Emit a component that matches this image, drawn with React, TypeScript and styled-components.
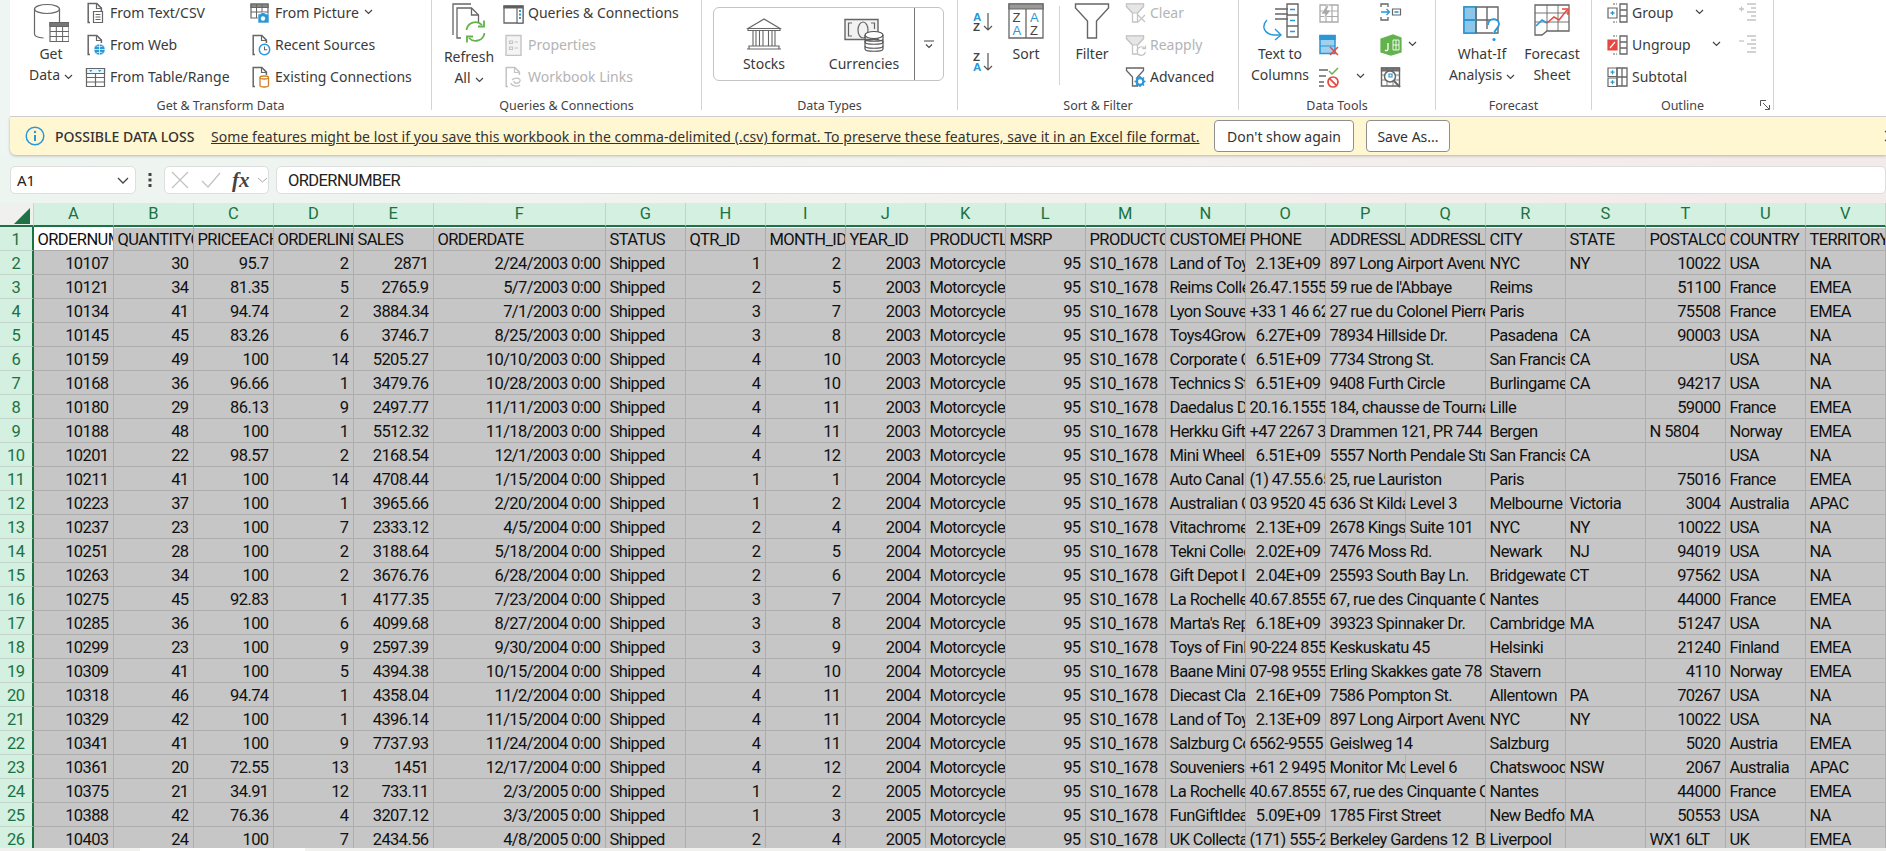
import React from 'react'
import styled, { createGlobalStyle } from 'styled-components'

const GlobalStyle = createGlobalStyle`
  html, body {
    margin: 0;
    padding: 0;
    height: 851px;
    overflow: hidden;
    background: #eef5f2;
  }
`

const uiFont = `"Noto Sans", "Open Sans", sans-serif`
const cellFont = `Roboto, "Liberation Sans", sans-serif`

const Page = styled.div`
  width: 1886px;
  height: 851px;
  display: flex;
  flex-direction: column;
  overflow: hidden;
  font-family: ${uiFont};
  color: #3a3a3a;
`

const Ribbon = styled.div`
  height: 116px;
  margin-left: 10px;
  display: flex;
  background: #fff;
  border-bottom: 1px solid #d6d6d6;
`

const Group = styled.div<{ $width: number }>`
  width: ${(p) => p.$width}px;
  height: 110px;
  flex: none;
  box-sizing: border-box;
  border-right: 1px solid #d4d4d4;
`

const GroupBody = styled.div<{ $pad: number }>`
  height: 95px;
  display: flex;
  padding-left: ${(p) => p.$pad}px;
  box-sizing: border-box;
`

const GroupLabel = styled.div`
  position: relative;
  height: 15px;
  line-height: 22px;
  text-align: center;
  font-size: 12.5px;
  color: #444;
  white-space: nowrap;
`

const Launcher = styled.svg`
  position: absolute;
  right: 3px;
  top: 5px;
`

const LargeButton = styled.div<{ $width: number; $slot?: number; $after?: number }>`
  width: ${(p) => p.$width}px;
  flex: none;
  margin-right: ${(p) => p.$after ?? 0}px;
  display: flex;
  flex-direction: column;
  align-items: center;
  font-size: 14px;
  line-height: 21px;
  white-space: nowrap;
  & > svg {
    height: ${(p) => p.$slot ?? 43}px;
    flex: none;
  }
`

const SmallList = styled.div<{ $width?: number; $after?: number }>`
  width: ${(p) => (p.$width ? `${p.$width}px` : 'auto')};
  flex: none;
  margin-right: ${(p) => p.$after ?? 0}px;
  display: flex;
  flex-direction: column;
  gap: 7px;
`

const SmallRow = styled.div<{ $off?: boolean }>`
  height: 25px;
  box-sizing: border-box;
  padding-bottom: 1px;
  display: flex;
  align-items: center;
  gap: 3px;
  font-size: 14px;
  white-space: nowrap;
  color: ${(p) => (p.$off ? '#b4b4b4' : '#3a3a3a')};
  & > svg:first-child {
    margin-top: 1px;
  }
`

const Caret = styled.svg<{ $left?: number }>`
  margin-left: ${(p) => p.$left ?? 4}px;
  flex: none;
`

const Gallery = styled.div`
  width: 231px;
  height: 74px;
  margin: 7px 0 0 0;
  box-sizing: border-box;
  display: flex;
  border: 1px solid #c4c4c4;
  border-radius: 6px;
`

const GalleryItem = styled.div`
  width: 100px;
  flex: none;
  display: flex;
  flex-direction: column;
  align-items: center;
  padding-top: 10px;
  box-sizing: border-box;
  font-size: 14px;
  line-height: 22px;
  gap: 1px;
`

const GalleryMore = styled.div`
  flex: 1;
  display: flex;
  align-items: center;
  justify-content: center;
  border-left: 1px solid #777;
`

const SortStack = styled.div`
  width: 20px;
  flex: none;
  margin: 12px 13px 0 0;
  display: flex;
  flex-direction: column;
  gap: 20px;
`

const InnerRule = styled.div`
  width: 1px;
  height: 79px;
  margin: 6px 12px 0 0;
  flex: none;
  background: #d4d4d4;
`

const Notice = styled.div`
  height: 38px;
  margin-left: 10px;
  flex: none;
  display: flex;
  align-items: center;
  padding-left: 15px;
  background: #fff6d2;
  border-bottom-left-radius: 6px;
  box-shadow: 0 1px 3px rgba(0, 0, 0, 0.25);
  font-size: 14px;
  white-space: nowrap;
  position: relative;
`

const NoticeTitle = styled.span`
  margin-left: 10px;
  width: 156px;
  flex: none;
  font-weight: 500;
  color: #333;
`

const NoticeText = styled.span`
  width: 988px;
  flex: none;
  text-decoration: underline;
  letter-spacing: 0.05px;
  color: #333;
`

const NoticeButton = styled.div<{ $width: number; $left: number }>`
  width: ${(p) => p.$width}px;
  margin-left: ${(p) => p.$left}px;
  height: 32px;
  flex: none;
  display: flex;
  align-items: center;
  justify-content: center;
  box-sizing: border-box;
  background: #fff;
  border: 1px solid #8f8f8f;
  border-radius: 4px;
  color: #333;
`

const NoticeClose = styled.svg`
  margin-left: auto;
  margin-right: -10px;
  flex: none;
`

const FormulaArea = styled.div`
  height: 48px;
  flex: none;
  box-sizing: border-box;
  padding: 11px 0 9px 10px;
  display: flex;
  background: linear-gradient(90deg, #edf5f1 0%, #f3f2ef 50%, #f3eaea 100%);
`

const FieldBox = styled.div<{ $width?: number; $left?: number }>`
  width: ${(p) => (p.$width ? `${p.$width}px` : 'auto')};
  flex: ${(p) => (p.$width ? 'none' : '1')};
  margin-left: ${(p) => p.$left ?? 0}px;
  height: 28px;
  box-sizing: border-box;
  display: flex;
  align-items: center;
  background: #fff;
  border: 1px solid #dedede;
  border-radius: 5px;
`

const NameText = styled.span`
  margin-left: 6px;
  width: 100px;
  font-size: 15px;
  color: #222;
`

const GripDots = styled.svg`
  margin: 0 12px 0 12px;
  flex: none;
  align-self: center;
`

const BarGlyph = styled.svg<{ $left: number }>`
  margin-left: ${(p) => p.$left}px;
  flex: none;
`

const FxMark = styled.span`
  font-family: "Liberation Serif", serif;
  font-style: italic;
  font-weight: 700;
  font-size: 21px;
  line-height: 26px;
  width: 24px;
  margin-left: 11px;
  color: #444;
`

const FormulaText = styled.span`
  margin-left: 11px;
  font-family: ${cellFont};
  font-size: 16.5px;
  letter-spacing: -0.6px;
  color: #222;
`

const SheetArea = styled.div`
  flex: 1;
  overflow: hidden;
  min-height: 0;
`

const SheetGrid = styled.div`
  display: grid;
  grid-template-columns: 33.5px repeat(5, 80px) 172px repeat(16, 80px);
  grid-template-rows: 23.67px;
  grid-auto-rows: 24px;
  font-family: ${cellFont};
  font-size: 16.5px;
  letter-spacing: -0.6px;
  color: #111;
`

const CornerCell = styled.div`
  background: #f0f0ee;
  border-bottom: 2px solid #1e7145;
  border-right: 1px solid #c9d4ce;
  display: flex;
  align-items: flex-end;
  justify-content: flex-end;
  padding: 0 3px 1px 0;
`

const ColHead = styled.div`
  background: #d3f0e0;
  color: #1e7145;
  text-align: center;
  line-height: 22px;
  border-right: 1px solid #c2d5ca;
  border-bottom: 2px solid #1e7145;
  box-sizing: border-box;
`

const RowHead = styled.div`
  background: #d3f0e0;
  color: #1e7145;
  text-align: center;
  line-height: 25px;
  box-sizing: border-box;
  border-right: 2px solid #1e7145;
  border-bottom: 1px solid #c2d5ca;
`

const Cell = styled.div<{ $right: boolean; $span: number; $active: boolean; $top: boolean }>`
  grid-column: span ${(p) => p.$span};
  box-sizing: border-box;
  overflow: hidden;
  white-space: pre;
  line-height: 25px;
  padding: 0 4px;
  text-align: ${(p) => (p.$right ? 'right' : 'left')};
  background: ${(p) => (p.$active ? '#fff' : '#c6c6c6')};
  border-right: 1px solid #adadad;
  border-bottom: 1px solid #adadad;
  box-shadow: ${(p) => (p.$top ? 'inset 0 1px 0 #fff' : 'none')};
`

const BottomStrip = styled.div`
  height: 3px;
  flex: none;
  display: flex;
  background: #f1f1f0;
`

const BottomTab = styled.div`
  width: 165px;
  margin-left: 140px;
  background: #fff;
`

const IconSvg = styled.svg`
  flex: none;
`

// ---- drawings ----

const ink = '#666'
const off = '#c4c4c4'
const blue = '#2a97d6'
const green = '#62b34c'
const red = '#e5493f'
const amber = '#d17f21'

const Ico = ({ w = 22, h = 22, children }: { w?: number; h?: number; children: React.ReactNode }) => (
  <IconSvg width={w} height={h} viewBox={`0 0 ${w} ${h}`} fill="none" stroke={ink} strokeWidth="1.2">
    {children}
  </IconSvg>
)

const Doc = ({ c = ink }: { c?: string }) => (
  <>
    <path d="M5 20.5H3.2V1.5h8.6l4.6 4.6V9" stroke={c} strokeWidth="1.5" />
    <path d="M11.5 1.5v5h5" stroke={c} />
  </>
)

const DownCaret = ({ left, color = '#444' }: { left?: number; color?: string }) => (
  <Caret $left={left} width="9" height="6" viewBox="0 0 9 6" fill="none" stroke={color} strokeWidth="1.2">
    <path d="M1 1l3.5 3.5L8 1" />
  </Caret>
)

const GetDataIcon = () => (
  <Ico w={36} h={43}>
    <ellipse cx="14" cy="9" rx="12.5" ry="4.5" />
    <path d="M1.5 9v25c0 2 4 3.6 9 4M26.5 9v13" />
    <path d="M17 22.5h19v19H17z" fill="#fff" />
    <path d="M17 22.5h19v4H17z" fill="#777" />
    <path d="M17 31.5h19M17 36.5h19M23.3 26.5v15M29.6 26.5v15" strokeWidth="1" />
  </Ico>
)

const TextCsvIcon = () => (
  <Ico>
    <Doc />
    <path d="M8.5 9.5h9v11h-9z" fill="#fff" />
    <path d="M10.5 12.5h5M10.5 15h5M10.5 17.5h5" strokeWidth="1" />
  </Ico>
)

const WebIcon = () => (
  <Ico>
    <Doc />
    <circle cx="14.5" cy="15.5" r="5.6" fill={blue} stroke="#fff" strokeWidth="0.6" />
    <path d="M9 15.5h11M14.5 10v11M11.5 12c2 1 4 1 6 0M11.5 19c2-1 4-1 6 0" stroke="#fff" strokeWidth="0.7" />
  </Ico>
)

const TableIcon = () => (
  <Ico>
    <path d="M1.5 2.5h18v18h-18z" />
    <path d="M1.5 2.5h18v5h-18z" fill="#eaf5fc" />
    <path d="M4 4h3.5L5.7 6zM13 4h3.5l-1.8 2z" fill={blue} stroke="none" />
    <path d="M1.5 11.5h18M1.5 16h18M10.5 7.5v13" />
  </Ico>
)

const PictureIcon = () => (
  <Ico>
    <path d="M1 2h17v14H1z" />
    <path d="M1 2h17v3.5H1z" fill="#888" />
    <path d="M1 10h17M6.5 2v14M12 2v14" strokeWidth="1" />
    <path d="M8 12h2.5l1-1.5h3l1 1.5h3.5v9H8z" fill={blue} stroke="#fff" strokeWidth="0.6" />
    <circle cx="13" cy="16.5" r="2.2" fill="#fff" stroke="none" />
  </Ico>
)

const RecentIcon = () => (
  <Ico>
    <Doc />
    <circle cx="14.5" cy="15.5" r="5.2" fill="#fff" stroke={blue} strokeWidth="1.5" />
    <path d="M14.5 12.5v3.2h2.8" stroke={ink} strokeWidth="1.1" />
  </Ico>
)

const ExistingIcon = () => (
  <Ico>
    <Doc />
    <path d="M10 11.5c0-2 8.5-2 8.5 0v8c0 2-8.5 2-8.5 0z" fill="#fff" stroke={amber} strokeWidth="1.3" />
    <path d="M10 11.5c0 2 8.5 2 8.5 0" stroke={amber} strokeWidth="1.3" />
  </Ico>
)

const RefreshIcon = () => (
  <Ico w={36} h={46}>
    <path d="M2 35V4h18" strokeWidth="1.3" />
    <path d="M10 38H6V8h14.5l7 7v7" strokeWidth="1.3" />
    <path d="M20.5 8v7h7" strokeWidth="1.3" />
    <path d="M15.5 30a9 9 0 0 1 15.5-5" stroke={green} strokeWidth="1.8" />
    <path d="M33 20.5v6h-6" stroke={green} strokeWidth="1.8" />
    <path d="M33.5 33a9 9 0 0 1-15.5 5" stroke={green} strokeWidth="1.8" />
    <path d="M16 42.5v-6h6" stroke={green} strokeWidth="1.8" />
  </Ico>
)

const QueriesIcon = () => (
  <Ico>
    <path d="M1 4h19v17H1z" strokeWidth="1.3" />
    <path d="M1 4h19v2H1z" fill="#555" />
    <path d="M14 6h6v15h-6z" fill="#fff" />
    <path d="M16 9h2M16 12.5h2M16 16h2" stroke={blue} strokeWidth="2" />
  </Ico>
)

const PropertiesIcon = () => (
  <Ico>
    <path d="M3 1.5h15v20H3z" stroke={off} fill="#f4f4f4" strokeWidth="1.4" />
    <path d="M6.5 7h3v2.5h-3zM6.5 13h3v2.5h-3zM11.5 8h3.5M11.5 14h3.5" stroke={off} />
  </Ico>
)

const LinksIcon = () => (
  <Ico>
    <Doc c={off} />
    <path d="M9 14c3-3 9-2 8 1s-6 3-6 0M8 17c0 3 7 4 9 2" stroke={off} strokeWidth="1.3" />
  </Ico>
)

const StocksIcon = () => (
  <Ico w={36} h={34}>
    <path d="M18 1L2 10.5h32z" />
    <path d="M2 10.5h32v2H2zM1 31h34M3 28h30v3H3z" />
    <path d="M7 13v15M13.5 13v15M22.5 13v15M29 13v15M10 13v15M26 13v15M17 13v15" strokeWidth="1.1" />
  </Ico>
)

const CurrencyIcon = () => (
  <Ico w={40} h={34}>
    <path d="M1 1.5h33v20H1z" strokeWidth="1.4" fill="#f2f2f2" />
    <path d="M8 5H4.5v13H8M27 5h3.5v6" />
    <ellipse cx="19" cy="12" rx="5" ry="8" />
    <path d="M21 24c0-3 18-3 18 0v7c0 3-18 3-18 0z" fill="#fff" stroke="#555" />
    <ellipse cx="30" cy="17" rx="9" ry="3.5" fill="#fff" stroke="#555" />
    <path d="M21 17v7M39 17v7M21 24c0 3 18 3 18 0M21 21c0 3 18 3 18 0M21 28c0 3 18 3 18 0" stroke="#555" />
  </Ico>
)

const Letter = styled.text<{ $blue?: boolean }>`
  font-family: "Liberation Sans", sans-serif;
  fill: ${(p) => (p.$blue ? blue : '#444')};
  stroke: none;
`

const SortIcon = ({ flip }: { flip?: boolean }) => (
  <Ico w={20} h={20}>
    <Letter x="0" y="9" fontSize="11.5" fontWeight="700" $blue={!flip}>{flip ? 'Z' : 'A'}</Letter>
    <Letter x="0" y="19" fontSize="11.5" fontWeight="700" $blue={flip}>{flip ? 'A' : 'Z'}</Letter>
    <path d="M15 1v17M11 14l4 4 4-4" stroke="#555" strokeWidth="1.2" />
  </Ico>
)

const SortLargeIcon = () => (
  <Ico w={36} h={43}>
    <path d="M1 4h34v34H1z" strokeWidth="1.3" />
    <path d="M1 4h34v5H1z" fill="#999" />
    <path d="M18 9v29" strokeWidth="1.3" />
    <Letter x="4.5" y="22" fontSize="13">Z</Letter>
    <Letter x="4.5" y="35" fontSize="13" $blue>A</Letter>
    <Letter x="22" y="22" fontSize="13" $blue>A</Letter>
    <Letter x="22" y="35" fontSize="13">Z</Letter>
  </Ico>
)

const FilterLargeIcon = () => (
  <Ico w={36} h={43}>
    <path d="M1.5 4h33v4L22.5 21v17h-9V21L1.5 8z" strokeWidth="1.4" />
  </Ico>
)

const Funnel = ({ c = off }: { c?: string }) => (
  <path d="M1.5 2h17v2.5l-6 6.5v9h-5v-9l-6-6.5z" stroke={c} strokeWidth="1.3" />
)

const ClearIcon = () => (
  <Ico>
    <Funnel />
    <path d="M1.5 2h17v2.5l-6 6.5h-5l-6-6.5z" fill="#e6e6e6" stroke={off} />
    <path d="M13 13l7 7M20 13l-7 7" stroke={off} strokeWidth="1.3" />
  </Ico>
)

const ReapplyIcon = () => (
  <Ico>
    <Funnel />
    <path d="M1.5 2h17v2.5l-6 6.5h-5l-6-6.5z" fill="#e6e6e6" stroke={off} />
    <path d="M12 17a4.5 4.5 0 0 1 8-2.5M20.5 11.5v3.2h-3.2M20.5 18a4.5 4.5 0 0 1-7.5 2" stroke={off} strokeWidth="1.2" />
  </Ico>
)

const AdvancedIcon = () => (
  <Ico>
    <Funnel c={ink} />
    <circle cx="15" cy="15.5" r="3.4" stroke={blue} strokeWidth="2.2" />
    <path d="M15 10v1.8M15 19.2V21M9.5 15.5h1.8M18.7 15.5h1.8M11 11.5l1.3 1.3M17.7 18.2l1.3 1.3M19 11.5l-1.3 1.3M12.3 18.2L11 19.5" stroke={blue} strokeWidth="1.6" />
  </Ico>
)

const TextColumnsIcon = () => (
  <Ico w={40} h={43}>
    <path d="M15 9h13M15 14h13M15 19h13" strokeWidth="1.4" />
    <path d="M27 4h11v33H27z" strokeWidth="1.4" />
    <path d="M27 15h11M27 26h11" strokeWidth="1.4" />
    <path d="M30 9.5h5M30 20.5h5M30 31.5h5" stroke={blue} strokeWidth="1.4" />
    <path d="M7 20c-6 6-3 14 7 15h7" stroke={blue} strokeWidth="1.4" />
    <path d="M15 29l6 6-6 5" stroke={blue} strokeWidth="1.4" />
  </Ico>
)

const FlashIcon = () => (
  <Ico>
    <path d="M2 3h18v17H2z" stroke="#aaa" strokeWidth="1.3" />
    <path d="M2 9h18M2 14.5h18M8 3v17M14 3v17" stroke="#aaa" />
    <path d="M3 12l6-9 2 0-2 5h4L6 17l1-5z" fill="#a8a8a8" stroke="#fff" strokeWidth="0.6" />
  </Ico>
)

const DuplicatesIcon = () => (
  <Ico>
    <path d="M2 1.5h15v18H2z" fill="#9fd0ee" stroke={blue} strokeWidth="1.5" />
    <path d="M2 1.5h15v4H2zM2 12h15" fill={blue} stroke={blue} strokeWidth="1.2" />
    <path d="M12 13l8 8M20 13l-8 8" stroke={red} strokeWidth="1.5" />
  </Ico>
)

const ValidationIcon = () => (
  <Ico>
    <path d="M1 4h9M1 10h7M1 16h5M1 20h5" strokeWidth="1.5" />
    <path d="M11 5l3 3 6-6" stroke={green} strokeWidth="1.5" />
    <circle cx="15" cy="16" r="5" stroke={red} strokeWidth="1.7" fill="#fff" />
    <path d="M11.6 12.6l6.8 6.8" stroke={red} strokeWidth="1.7" />
  </Ico>
)

const ConsolidateIcon = () => (
  <Ico>
    <path d="M1 5V2h7v3M1 15v3h7v-3" strokeWidth="1.3" />
    <path d="M1 10h8M6.5 7l3 3-3 3" stroke={blue} strokeWidth="1.3" />
    <path d="M12.5 7h8v6h-8z" strokeWidth="1.2" />
    <path d="M14.5 10h4" stroke={blue} strokeWidth="1.6" />
  </Ico>
)

const CubeIcon = () => (
  <Ico>
    <path d="M1 5l12-4 8 3v14l-10 3-10-3z" fill={green} stroke={green} />
    <path d="M13 6h6v10h-6zM16 6v10M13 11h6" stroke="#fff" strokeWidth="0.9" />
    <path d="M8 9v6c0 2-2 2-3 1" stroke="#fff" strokeWidth="1.3" />
  </Ico>
)

const ModelIcon = () => (
  <Ico>
    <path d="M1.5 2h18v18h-18z" strokeWidth="1.4" />
    <path d="M1.5 2h18v3h-18z" fill="#777" />
    <path d="M1.5 9h18M1.5 14h18M7 2v18M13 2v18" strokeWidth="0.8" />
    <circle cx="10" cy="10.5" r="5.5" fill="#fff" strokeWidth="1.5" />
    <path d="M9 8h3v3H9z" stroke={blue} strokeWidth="1.2" />
    <path d="M14 15l6 6" strokeWidth="2" />
  </Ico>
)

const WhatIfIcon = () => (
  <Ico w={38} h={43}>
    <path d="M1 7h34v26H1z" strokeWidth="1.4" />
    <path d="M1 7h12v26H1z" fill="#8cc7ea" stroke={blue} strokeWidth="1.6" />
    <path d="M1 20h34M13 7v26M24 7v22" strokeWidth="1.4" />
    <path d="M1 20h12" stroke={blue} strokeWidth="2" />
    <path d="M25 25c0-8 11-7 11-1 0 5-5 5-5 10" fill="#fff" stroke={blue} strokeWidth="1.8" />
    <circle cx="31" cy="39.5" r="1.6" fill={blue} stroke="none" />
  </Ico>
)

const ForecastIcon = () => (
  <Ico w={36} h={43}>
    <path d="M1 5h34v26H13l-5 4H1z" strokeWidth="1.3" />
    <path d="M1 13h34M1 22h34M13 5v26M24 5v26" strokeWidth="0.9" />
    <path d="M2 26l6-6 5 3" stroke={blue} strokeWidth="1.5" />
    <path d="M13 23l7-6 5 3 8-10" stroke={red} strokeWidth="1.5" />
    <path d="M28 9h6v6" stroke={red} strokeWidth="1.5" />
  </Ico>
)

const Rows = () => <path d="M13 2h7v18h-7zM13 8h7M13 14h7" strokeWidth="1.3" />

const GroupIcon = () => (
  <Ico>
    <Rows />
    <path d="M1 6h9v10H1z" strokeWidth="1.2" />
    <path d="M3.5 11h4M5.5 9v4" stroke={blue} strokeWidth="1.3" />
    <path d="M6 2h4M6 20h4" strokeWidth="1.1" strokeDasharray="2 1" />
  </Ico>
)

const UngroupIcon = () => (
  <Ico>
    <Rows />
    <path d="M1 6h9v10H1z" fill={red} stroke={red} />
    <path d="M3 14l5-6" stroke="#fff" strokeWidth="1.2" />
    <path d="M6 2h4M6 20h4" strokeWidth="1.1" strokeDasharray="2 1" />
  </Ico>
)

const SubtotalIcon = () => (
  <Ico>
    <path d="M10 2h10v18H10zM15 2v18M10 11h10" strokeWidth="1.3" />
    <path d="M1 2h9v8.5H1zM1 12h9v8.5H1z" strokeWidth="1.2" />
    <path d="M3.5 6.2h4M5.5 4.2v4M3.5 16.2h4M5.5 14.2v4" stroke={blue} strokeWidth="1.3" />
  </Ico>
)

const OutlineIcon = ({ minus }: { minus?: boolean }) => (
  <Ico>
    <path d="M9 2h9M13 6h5M9 10h9M13 14h5M9 18h9" stroke={off} strokeWidth="1.3" />
    <path d={minus ? 'M1 7h5' : 'M1 7h5M3.5 4.5v5'} stroke={off} strokeWidth="1.3" />
  </Ico>
)

const InfoIcon = () => (
  <IconSvg width="20" height="20" viewBox="0 0 20 20" fill="none">
    <circle cx="10" cy="10" r="8.8" stroke={blue} strokeWidth="1.5" />
    <circle cx="10" cy="6" r="1.2" fill={blue} />
    <path d="M10 9v6" stroke={blue} strokeWidth="2" />
  </IconSvg>
)

// ---- sheet data ----

const COLS = 'ABCDEFGHIJKLMNOPQRSTUV'.split('')

const HEADERS = ['ORDERNUMBER', 'QUANTITYORDERED', 'PRICEEACH', 'ORDERLINENUMBER', 'SALES', 'ORDERDATE', 'STATUS', 'QTR_ID', 'MONTH_ID', 'YEAR_ID', 'PRODUCTLINE', 'MSRP', 'PRODUCTCODE', 'CUSTOMERNAME', 'PHONE', 'ADDRESSLINE1', 'ADDRESSLINE2', 'CITY', 'STATE', 'POSTALCODE', 'COUNTRY', 'TERRITORY']

// order|qty|price|line|sales|date|qtr|month|year|customer|phone|addr1|addr2|city|state|postal|country|territory
const RAW = `10107|30|95.7|2|2871|2/24/2003|1|2|2003|Land of Toys Inc.|2.13E+09|897 Long Airport Avenue||NYC|NY|10022|USA|NA
10121|34|81.35|5|2765.9|5/7/2003|2|5|2003|Reims Collectables|26.47.1555|59 rue de l'Abbaye||Reims||51100|France|EMEA
10134|41|94.74|2|3884.34|7/1/2003|3|7|2003|Lyon Souveniers|+33 1 46 62 7555|27 rue du Colonel Pierre Avia||Paris||75508|France|EMEA
10145|45|83.26|6|3746.7|8/25/2003|3|8|2003|Toys4GrownUps.com|6.27E+09|78934 Hillside Dr.||Pasadena|CA|90003|USA|NA
10159|49|100|14|5205.27|10/10/2003|4|10|2003|Corporate Gift Ideas Co.|6.51E+09|7734 Strong St.||San Francisco|CA||USA|NA
10168|36|96.66|1|3479.76|10/28/2003|4|10|2003|Technics Stores Inc.|6.51E+09|9408 Furth Circle||Burlingame|CA|94217|USA|NA
10180|29|86.13|9|2497.77|11/11/2003|4|11|2003|Daedalus Designs Imports|20.16.1555|184, chausse de Tournai||Lille||59000|France|EMEA
10188|48|100|1|5512.32|11/18/2003|4|11|2003|Herkku Gifts|+47 2267 3215|Drammen 121, PR 744 Sentrum||Bergen||N 5804|Norway|EMEA
10201|22|98.57|2|2168.54|12/1/2003|4|12|2003|Mini Wheels Co.|6.51E+09|5557 North Pendale Street||San Francisco|CA||USA|NA
10211|41|100|14|4708.44|1/15/2004|1|1|2004|Auto Canal Petit|(1) 47.55.6555|25, rue Lauriston||Paris||75016|France|EMEA
10223|37|100|1|3965.66|2/20/2004|1|2|2004|Australian Collectors, Co.|03 9520 4555|636 St Kilda Road|Level 3|Melbourne|Victoria|3004|Australia|APAC
10237|23|100|7|2333.12|4/5/2004|2|4|2004|Vitachrome Inc.|2.13E+09|2678 Kingston Rd.|Suite 101|NYC|NY|10022|USA|NA
10251|28|100|2|3188.64|5/18/2004|2|5|2004|Tekni Collectables Inc.|2.02E+09|7476 Moss Rd.||Newark|NJ|94019|USA|NA
10263|34|100|2|3676.76|6/28/2004|2|6|2004|Gift Depot Inc.|2.04E+09|25593 South Bay Ln.||Bridgewater|CT|97562|USA|NA
10275|45|92.83|1|4177.35|7/23/2004|3|7|2004|La Rochelle Gifts|40.67.8555|67, rue des Cinquante Otages||Nantes||44000|France|EMEA
10285|36|100|6|4099.68|8/27/2004|3|8|2004|Marta's Replicas Co.|6.18E+09|39323 Spinnaker Dr.||Cambridge|MA|51247|USA|NA
10299|23|100|9|2597.39|9/30/2004|3|9|2004|Toys of Finland, Co.|90-224 8555|Keskuskatu 45||Helsinki||21240|Finland|EMEA
10309|41|100|5|4394.38|10/15/2004|4|10|2004|Baane Mini Imports|07-98 9555|Erling Skakkes gate 78||Stavern||4110|Norway|EMEA
10318|46|94.74|1|4358.04|11/2/2004|4|11|2004|Diecast Classics Inc.|2.16E+09|7586 Pompton St.||Allentown|PA|70267|USA|NA
10329|42|100|1|4396.14|11/15/2004|4|11|2004|Land of Toys Inc.|2.13E+09|897 Long Airport Avenue||NYC|NY|10022|USA|NA
10341|41|100|9|7737.93|11/24/2004|4|11|2004|Salzburg Collectables|6562-9555|Geislweg 14||Salzburg||5020|Austria|EMEA
10361|20|72.55|13|1451|12/17/2004|4|12|2004|Souveniers And Things Inc.|+61 2 9495 8555|Monitor Money Building|Level 6|Chatswood|NSW|2067|Australia|APAC
10375|21|34.91|12|733.11|2/3/2005|1|2|2005|La Rochelle Gifts|40.67.8555|67, rue des Cinquante Otages||Nantes||44000|France|EMEA
10388|42|76.36|4|3207.12|3/3/2005|1|3|2005|FunGiftIdeas.com|5.09E+09|1785 First Street||New Bedford|MA|50553|USA|NA
10403|24|100|7|2434.56|4/8/2005|2|4|2005|UK Collectables, Ltd.|(171) 555-2282|Berkeley Gardens 12  Brewery||Liverpool||WX1 6LT|UK|EMEA`

const ROWS: string[][] = RAW.split('\n').map((line) => {
  const v = line.split('|')
  return [v[0], v[1], v[2], v[3], v[4], `${v[5]} 0:00`, 'Shipped', v[6], v[7], v[8], 'Motorcycles', '95', 'S10_1678', ...v.slice(9)]
})

const isRight = (v: string) => /^\d+(\.\d+)?(E\+\d+)?$/.test(v) || /^\d+\/\d+\/\d+ 0:00$/.test(v)

const SheetRow = ({ values, index }: { values: string[]; index: number }) => {
  const cells: React.ReactNode[] = []
  values.forEach((v, i) => {
    // ADDRESSLINE1 runs on over an empty ADDRESSLINE2
    if (i === 16 && v === '') return
    cells.push(
      <Cell
        key={i}
        $right={isRight(v)}
        $span={i === 15 && values[16] === '' ? 2 : 1}
        $active={index === 1 && i === 0}
        $top={index === 1}
      >
        {v}
      </Cell>,
    )
  })
  return (
    <>
      <RowHead>{index}</RowHead>
      {cells}
    </>
  )
}

const App = () => {
  return (
    <Page>
      <GlobalStyle />
      <Ribbon>
        <Group $width={422}>
          <GroupBody $pad={9}>
            <LargeButton $width={64} $after={2}>
              <GetDataIcon />
              <span>Get</span>
              <span>Data<DownCaret /></span>
            </LargeButton>
            <SmallList $width={165}>
              <SmallRow><TextCsvIcon />From Text/CSV</SmallRow>
              <SmallRow><WebIcon />From Web</SmallRow>
              <SmallRow><TableIcon />From Table/Range</SmallRow>
            </SmallList>
            <SmallList>
              <SmallRow><PictureIcon />From Picture<DownCaret left={2} /></SmallRow>
              <SmallRow><RecentIcon />Recent Sources</SmallRow>
              <SmallRow><ExistingIcon />Existing Connections</SmallRow>
            </SmallList>
          </GroupBody>
          <GroupLabel>Get &amp; Transform Data</GroupLabel>
        </Group>

        <Group $width={270}>
          <GroupBody $pad={5}>
            <LargeButton $width={64} $slot={46} $after={2}>
              <RefreshIcon />
              <span>Refresh</span>
              <span>All<DownCaret /></span>
            </LargeButton>
            <SmallList>
              <SmallRow><QueriesIcon />Queries &amp; Connections</SmallRow>
              <SmallRow $off><PropertiesIcon />Properties</SmallRow>
              <SmallRow $off><LinksIcon />Workbook Links</SmallRow>
            </SmallList>
          </GroupBody>
          <GroupLabel>Queries &amp; Connections</GroupLabel>
        </Group>

        <Group $width={256}>
          <GroupBody $pad={11}>
            <Gallery>
              <GalleryItem><StocksIcon />Stocks</GalleryItem>
              <GalleryItem><CurrencyIcon />Currencies</GalleryItem>
              <GalleryMore>
                <svg width="10" height="9" viewBox="0 0 10 9" fill="none" stroke="#444" strokeWidth="1.1">
                  <path d="M0 1h10M2 4.5l3 3 3-3" />
                </svg>
              </GalleryMore>
            </Gallery>
          </GroupBody>
          <GroupLabel>Data Types</GroupLabel>
        </Group>

        <Group $width={281}>
          <GroupBody $pad={15}>
            <SortStack>
              <SortIcon />
              <SortIcon flip />
            </SortStack>
            <LargeButton $width={40} $after={13}>
              <SortLargeIcon />
              <span>Sort</span>
            </LargeButton>
            <InnerRule />
            <LargeButton $width={40} $after={13}>
              <FilterLargeIcon />
              <span>Filter</span>
            </LargeButton>
            <SmallList>
              <SmallRow $off><ClearIcon />Clear</SmallRow>
              <SmallRow $off><ReapplyIcon />Reapply</SmallRow>
              <SmallRow><AdvancedIcon />Advanced</SmallRow>
            </SmallList>
          </GroupBody>
          <GroupLabel>Sort &amp; Filter</GroupLabel>
        </Group>

        <Group $width={197}>
          <GroupBody $pad={5}>
            <LargeButton $width={72} $after={2}>
              <TextColumnsIcon />
              <span>Text to</span>
              <span>Columns</span>
            </LargeButton>
            <SmallList $width={62}>
              <SmallRow><FlashIcon /></SmallRow>
              <SmallRow><DuplicatesIcon /></SmallRow>
              <SmallRow><ValidationIcon /><DownCaret left={13} /></SmallRow>
            </SmallList>
            <SmallList>
              <SmallRow><ConsolidateIcon /></SmallRow>
              <SmallRow><CubeIcon /><DownCaret left={3} /></SmallRow>
              <SmallRow><ModelIcon /></SmallRow>
            </SmallList>
          </GroupBody>
          <GroupLabel>Data Tools</GroupLabel>
        </Group>

        <Group $width={156}>
          <GroupBody $pad={6}>
            <LargeButton $width={80}>
              <WhatIfIcon />
              <span>What-If</span>
              <span>Analysis<DownCaret /></span>
            </LargeButton>
            <LargeButton $width={60}>
              <ForecastIcon />
              <span>Forecast</span>
              <span>Sheet</span>
            </LargeButton>
          </GroupBody>
          <GroupLabel>Forecast</GroupLabel>
        </Group>

        <Group $width={182}>
          <GroupBody $pad={15}>
            <SmallList $width={131}>
              <SmallRow><GroupIcon />Group<DownCaret left={19} /></SmallRow>
              <SmallRow><UngroupIcon />Ungroup<DownCaret left={18} /></SmallRow>
              <SmallRow><SubtotalIcon />Subtotal</SmallRow>
            </SmallList>
            <SmallList>
              <SmallRow><OutlineIcon /></SmallRow>
              <SmallRow><OutlineIcon minus /></SmallRow>
            </SmallList>
          </GroupBody>
          <GroupLabel>
            Outline
            <Launcher width="10" height="10" viewBox="0 0 10 10" fill="none" stroke="#555" strokeWidth="1">
              <path d="M0.5 6V0.5H6M3 3l6 6M9.5 5v4.5H5" />
            </Launcher>
          </GroupLabel>
        </Group>
      </Ribbon>

      <Notice>
        <InfoIcon />
        <NoticeTitle>POSSIBLE DATA LOSS</NoticeTitle>
        <NoticeText>Some features might be lost if you save this workbook in the comma-delimited (.csv) format. To preserve these features, save it in an Excel file format.</NoticeText>
        <NoticeButton $width={140} $left={15}>Don't show again</NoticeButton>
        <NoticeButton $width={84} $left={12}>Save As...</NoticeButton>
        <NoticeClose width="12" height="12" viewBox="0 0 12 12" fill="none" stroke="#444" strokeWidth="1.1">
          <path d="M1 1l10 10M11 1L1 11" />
        </NoticeClose>
      </Notice>

      <FormulaArea>
        <FieldBox $width={126}>
          <NameText>A1</NameText>
          <svg width="12" height="7" viewBox="0 0 12 7" fill="none" stroke="#444" strokeWidth="1.3">
            <path d="M1 1l5 5 5-5" />
          </svg>
        </FieldBox>
        <GripDots width="4" height="14" viewBox="0 0 4 14" fill="#444">
          <rect x="0.5" y="0" width="3" height="3" />
          <rect x="0.5" y="5.5" width="3" height="3" />
          <rect x="0.5" y="11" width="3" height="3" />
        </GripDots>
        <FieldBox $width={105}>
          <BarGlyph $left={6} width="18" height="18" viewBox="0 0 18 18" fill="none" stroke="#c2c2c2" strokeWidth="1.2">
            <path d="M1 1l16 16M17 1L1 17" />
          </BarGlyph>
          <BarGlyph $left={12} width="20" height="16" viewBox="0 0 20 16" fill="none" stroke="#c2c2c2" strokeWidth="1.2">
            <path d="M1 9l6 6L19 1" />
          </BarGlyph>
          <FxMark>fx</FxMark>
          <BarGlyph $left={2} width="11" height="6" viewBox="0 0 11 6" fill="none" stroke="#aaa" strokeWidth="1">
            <path d="M1 1l4.5 4L10 1" />
          </BarGlyph>
        </FieldBox>
        <FieldBox $left={7}>
          <FormulaText>ORDERNUMBER</FormulaText>
        </FieldBox>
      </FormulaArea>

      <SheetArea>
        <SheetGrid>
          <CornerCell>
            <svg width="16" height="16" viewBox="0 0 16 16">
              <path d="M16 0v16H0z" fill="#1e7145" />
            </svg>
          </CornerCell>
          {COLS.map((c) => (
            <ColHead key={c}>{c}</ColHead>
          ))}
          <SheetRow values={HEADERS} index={1} />
          {ROWS.map((r, i) => (
            <SheetRow key={r[0]} values={r} index={i + 2} />
          ))}
        </SheetGrid>
      </SheetArea>
      <BottomStrip>
        <BottomTab />
      </BottomStrip>
    </Page>
  )
}

export default App
